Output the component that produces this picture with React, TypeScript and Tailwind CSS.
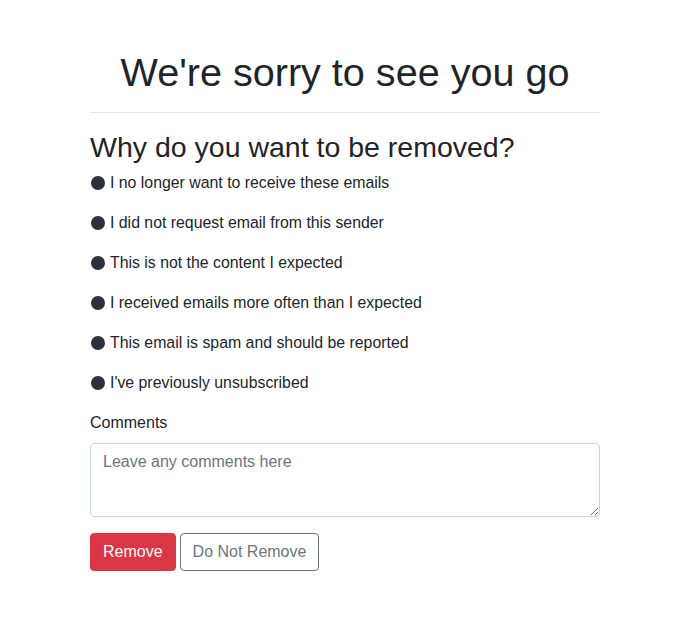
import React, { useState } from 'react';

const REASONS = [
  'I no longer want to receive these emails',
  'I did not request email from this sender',
  'This is not the content I expected',
  'I received emails more often than I expected',
  'This email is spam and should be reported',
  "I've previously unsubscribed",
];

export default function App() {
  const [reason, setReason] = useState<number | null>(null);

  return (
    <div className="min-h-screen bg-white text-[#212529] font-['Liberation_Sans',Arial,sans-serif]">
      <div className="w-[510px] mx-auto pt-[48px]">
        <h1 className="text-[39.6px] leading-[48px] text-center font-normal">We're sorry to see you go</h1>
        <hr className="mt-[16px] border-0 border-t border-[#e5e5e5]" />
        <h2 className="mt-[17px] text-[28.5px] leading-[34px] font-normal">Why do you want to be removed?</h2>
        <div className="mt-[7px] flex flex-col gap-[16px]">
          {REASONS.map((r, i) => (
            <label key={r} className="flex items-center h-[24px] text-[15.85px] cursor-pointer" onClick={() => setReason(i)}>
              <span className="ml-[1px] w-[14px] h-[14px] rounded-full bg-[#2c303a] flex items-center justify-center">
                {reason === i && <span className="w-[6px] h-[6px] rounded-full bg-white" />}
              </span>
              <span className="ml-[5px]">{r}</span>
            </label>
          ))}
        </div>
        <div className="mt-[16px] text-[16px] leading-[24px]">Comments</div>
        <textarea
          className="mt-[8px] block w-full h-[74px] px-[12px] py-[6px] text-[16px] leading-[24px] border border-[#ced4da] rounded-[4px] placeholder:text-[#6c757d] outline-none"
          placeholder="Leave any comments here"
        />
        <div className="mt-[16px] flex gap-[4px]">
          <button className="h-[38px] px-[12px] text-[16px] text-white bg-[#dc3545] border border-[#dc3545] rounded-[4px]">Remove</button>
          <button className="h-[38px] px-[12px] text-[16px] text-[#6c757d] bg-white border border-[#6c757d] rounded-[4px]">Do Not Remove</button>
        </div>
      </div>
    </div>
  );
}
